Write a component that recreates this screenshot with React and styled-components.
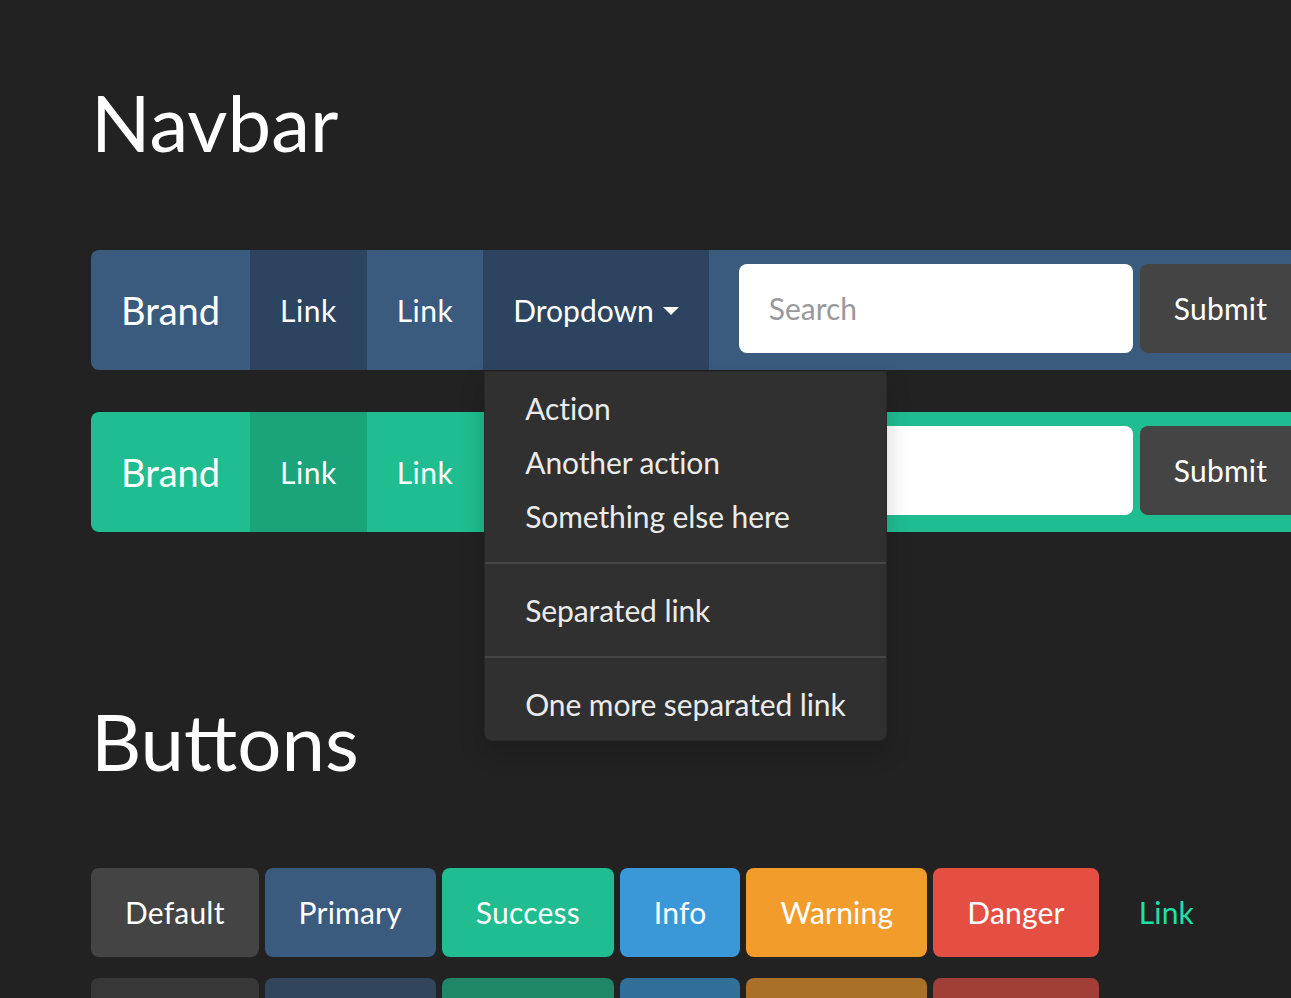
import React from "react"
import styled, { createGlobalStyle } from "styled-components"

const Global = createGlobalStyle`
  html, body {
    margin: 0;
    overflow: hidden;
    background: #222222;
  }
  body {
    font-family: Lato, "Open Sans", sans-serif;
    color: #ffffff;
  }
`

const Page = styled.div`
  padding: 80px 0 0 91px;
  width: 1500px;
`

const Heading = styled.h1`
  margin: 0;
  font-size: 78px;
  font-weight: 400;
  line-height: 1.1;
  color: #ffffff;
`

const Navbar = styled.nav`
  display: flex;
  align-items: stretch;
  height: 120px;
  width: 1400px;
  margin-top: ${(p) => p.$gap}px;
  background: ${(p) => p.$bg};
  border-radius: 8px;
  position: relative;
`

const Brand = styled.a`
  padding: 0 30px;
  font-size: 38px;
  line-height: 120px;
  color: #ffffff;
  border-radius: 8px 0 0 8px;
`

const NavItem = styled.div`
  position: relative;
  display: flex;
`

const NavLink = styled.a`
  display: flex;
  align-items: center;
  padding: 0 30px;
  font-size: 30px;
  line-height: 120px;
  letter-spacing: ${(p) => (p.$caret ? 0 : 0.5)}px;
  color: #ffffff;
  background: ${(p) => p.$active || "transparent"};
`

const Caret = styled.span`
  display: inline-block;
  width: 0;
  height: 0;
  margin-left: 9px;
  margin-top: 2px;
  border-top: 8px solid #ffffff;
  border-left: 8px solid transparent;
  border-right: 8px solid transparent;
`

const Menu = styled.ul`
  position: absolute;
  top: calc(100% + 1px);
  left: 1px;
  z-index: 10;
  margin: 0;
  padding: 9px 0;
  list-style: none;
  background: #303030;
  border: 1px solid rgba(0, 0, 0, 0.15);
  border-radius: 0 0 8px 8px;
  box-shadow: 0 12px 24px rgba(0, 0, 0, 0.175);
`

const MenuItem = styled.li`
  padding: 6px 40px;
  font-size: 30px;
  line-height: 42px;
  letter-spacing: -0.1px;
  color: #ebebeb;
  white-space: nowrap;
`

const Divider = styled.li`
  height: 2px;
  margin: 19px 0;
  background: #464545;
`

const Form = styled.form`
  display: flex;
  gap: 7px;
  margin-left: 30px;
  padding: 14px 0;
`

const SearchInput = styled.input`
  box-sizing: border-box;
  width: 394px;
  height: 89px;
  padding: 0 30px;
  border: none;
  border-radius: 8px;
  background: #ffffff;
  font-family: Lato, sans-serif;
  font-size: 30px;
  color: #444;
  outline: none;
  &::placeholder {
    color: #999999;
  }
`

const Button = styled.button`
  box-sizing: border-box;
  height: 89px;
  padding: 0 34px;
  border: none;
  border-radius: 8px;
  background: ${(p) => p.$bg};
  color: ${(p) => p.$color || "#ffffff"};
  font-family: Lato, sans-serif;
  font-size: 30px;
  letter-spacing: 0.2px;
  white-space: nowrap;
  opacity: ${(p) => (p.disabled ? 0.65 : 1)};
`

const ButtonRow = styled.div`
  display: flex;
  gap: 6px;
  margin-top: ${(p) => p.$gap}px;
`

const SectionHeading = styled(Heading)`
  margin-top: 167px;
`

const BUTTONS = [
  { label: "Default", bg: "#444444" },
  { label: "Primary", bg: "#3a5b7e" },
  { label: "Success", bg: "#1fbd8f" },
  { label: "Info", bg: "#3a98d8" },
  { label: "Warning", bg: "#f29c2c" },
  { label: "Danger", bg: "#e54f43" },
  { label: "Link", bg: "transparent", color: "#1fe0a8" },
]

function NavForm({ submitBg }) {
  return (
    <Form onSubmit={(e) => e.preventDefault()}>
      <SearchInput placeholder="Search" />
      <Button type="button" $bg={submitBg}>
        Submit
      </Button>
    </Form>
  )
}

export default function App() {
  return (
    <Page>
      <Global />
      <Heading>Navbar</Heading>

      <Navbar $bg="#3a5b7e" $gap={84} style={{ zIndex: 2 }}>
        <Brand>Brand</Brand>
        <NavLink $active="#2c4460">Link</NavLink>
        <NavLink>Link</NavLink>
        <NavItem>
          <NavLink $caret $active="#2c4460">
            Dropdown
            <Caret />
          </NavLink>
          <Menu>
            <MenuItem>Action</MenuItem>
            <MenuItem>Another action</MenuItem>
            <MenuItem>Something else here</MenuItem>
            <Divider />
            <MenuItem>Separated link</MenuItem>
            <Divider />
            <MenuItem>One more separated link</MenuItem>
          </Menu>
        </NavItem>
        <NavForm submitBg="#444444" />
      </Navbar>

      <Navbar $bg="#1fbd8f" $gap={42}>
        <Brand>Brand</Brand>
        <NavLink $active="#1ba37a">Link</NavLink>
        <NavLink>Link</NavLink>
        <NavItem>
          <NavLink $caret>
            Dropdown
            <Caret />
          </NavLink>
        </NavItem>
        <NavForm submitBg="#444444" />
      </Navbar>

      <SectionHeading>Buttons</SectionHeading>

      <ButtonRow $gap={83}>
        {BUTTONS.map((b) => (
          <Button key={b.label} type="button" $bg={b.bg} $color={b.color}>
            {b.label}
          </Button>
        ))}
      </ButtonRow>
      <ButtonRow $gap={21}>
        {BUTTONS.map((b) => (
          <Button key={b.label} type="button" disabled $bg={b.bg} $color={b.color}>
            {b.label}
          </Button>
        ))}
      </ButtonRow>
    </Page>
  )
}
